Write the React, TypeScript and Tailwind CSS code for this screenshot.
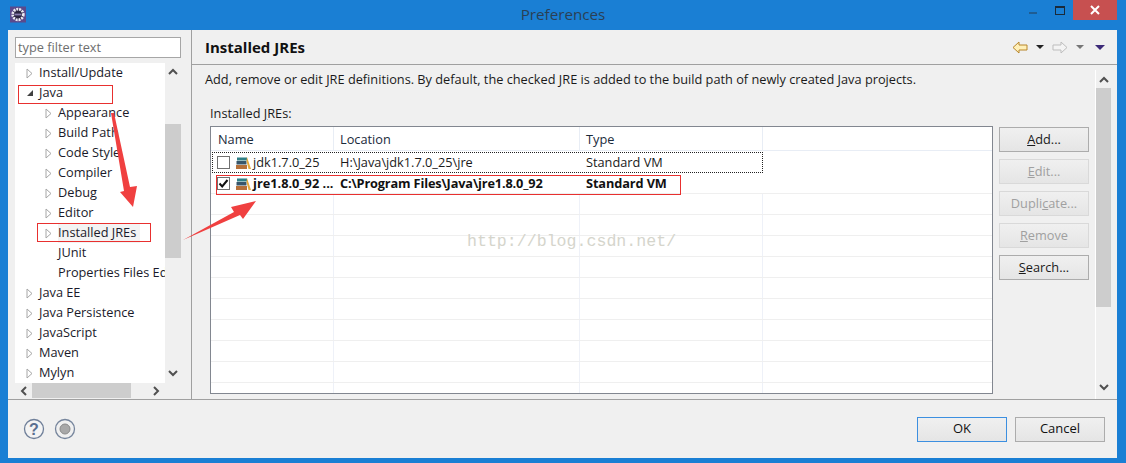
const F = "font-['Open_Sans','Noto_Sans',sans-serif]";

function Tri({ open }: { open?: boolean }) {
  return open ? (
    <svg width="8" height="8" viewBox="0 0 8 8" className="shrink-0"><path d="M7 1V7H1Z" fill="#404040" /></svg>
  ) : (
    <svg width="7" height="11" viewBox="0 0 7 11" className="shrink-0"><path d="M1 1L6 5.5L1 10Z" fill="#fff" stroke="#a6a6a6" /></svg>
  );
}

function Row({ label, depth, arrow = true, open, sel }: { label: string; depth: 0 | 1; arrow?: boolean; open?: boolean; sel?: boolean }) {
  return (
    <div className={`h-5 flex items-center whitespace-nowrap ${depth ? "pl-[30px]" : "pl-[11px]"}`}>
      <span className="w-[13px] shrink-0 flex justify-start">{arrow ? <Tri open={open} /> : null}</span>
      <span className={`text-[12.75px] text-[#1a1a2a] ${sel ? "bg-[#f3f3f3] pr-[4px]" : ""}`}>{label}</span>
    </div>
  );
}

function Chevron({ d, cls }: { d: "u" | "d" | "l" | "r"; cls?: string }) {
  const p = { u: "M1 7L5 3L9 7", d: "M1 3L5 7L9 3", l: "M7 1L3 5L7 9", r: "M3 1L7 5L3 9" }[d];
  return <svg width="10" height="10" viewBox="0 0 10 10" className={cls}><path d={p} fill="none" stroke="#505050" strokeWidth="2" /></svg>;
}

function Btn({ label, dis }: { label: [string, string, string]; dis?: boolean }) {
  return (
    <div className={`h-[25px] w-[90px] border flex items-center justify-center text-[12.75px] bg-gradient-to-b from-[#f0f0f0] to-[#e5e5e5] ${dis ? "border-[#d9d9d9] text-[#a0a0a0]" : "border-[#acacac] text-[#1a1a1a]"}`}>
      {label[0]}<span className="underline">{label[1]}</span>{label[2]}
    </div>
  );
}

function Books() {
  return (
    <svg width="16" height="14" viewBox="0 0 16 14" className="shrink-0">
      <rect x="1" y="1.5" width="10" height="3" fill="#2f7f86" />
      <rect x="0.5" y="5" width="10" height="3.5" fill="#38566b" />
      <rect x="0" y="9" width="11" height="4" fill="#b5703a" />
      <path d="M11 1L15 13H12.5L10.5 5Z" fill="#e5a93c" />
    </svg>
  );
}

function Box({ checked }: { checked?: boolean }) {
  return (
    <span className="w-[13px] h-[13px] border border-[#707070] bg-white shrink-0 flex items-center justify-center">
      {checked ? <svg width="11" height="11" viewBox="0 0 11 11"><path d="M1.5 5.5L4.2 8.5L9.5 2" fill="none" stroke="#111" strokeWidth="2" /></svg> : null}
    </span>
  );
}

const tree: [string, 0 | 1, boolean, boolean?][] = [
  ["Install/Update", 0, true],
  ["Java", 0, true, true],
  ["Appearance", 1, true],
  ["Build Path", 1, true],
  ["Code Style", 1, true],
  ["Compiler", 1, true],
  ["Debug", 1, true],
  ["Editor", 1, true],
  ["Installed JREs", 1, true],
  ["JUnit", 1, false],
  ["Properties Files Editor", 1, false],
  ["Java EE", 0, true],
  ["Java Persistence", 0, true],
  ["JavaScript", 0, true],
  ["Maven", 0, true],
  ["Mylyn", 0, true],
];

function Cols() {
  return (
    <>
      <span className="w-[123px] shrink-0 border-r border-[#eef1f8] h-full" />
      <span className="w-[246px] shrink-0 border-r border-[#eef1f8] h-full" />
      <span className="w-[183px] shrink-0 border-r border-[#eef1f8] h-full" />
    </>
  );
}

export default function App() {
  return (
    <div className={`relative w-[1126px] h-[463px] overflow-hidden bg-[#1a7fd4] flex flex-col ${F}`}>
      {/* Title bar */}
      <div className="h-[30px] shrink-0 flex items-start relative">
        <svg width="16" height="17" viewBox="0 0 18 18" className="ml-[10px] mt-[6px]">
          <rect width="18" height="18" fill="#5b4a8c" />
          <circle cx="9" cy="9" r="6" fill="#2b2540" stroke="#ecebf2" strokeWidth="3" strokeDasharray="2.2 1" />
          <rect x="5" y="8" width="8" height="2" fill="#8a7fb0" />
        </svg>
        <span className="absolute left-0 right-0 text-center text-[15.2px] text-[#2a3f55] top-[3px]">Preferences</span>
        <div className="ml-auto mr-[9px] flex items-start">
          <span className="w-[8px] h-[2px] bg-[#1f5d93] mt-[12px] mr-[18px]" />
          <span className="w-[10px] h-[9px] mt-[6px] border border-[#1a2a3a] border-t-2 mr-[8px]" />
          <span className="w-[44px] h-5 bg-[#c75050] flex items-center justify-center text-white">
            <svg width="10" height="10" viewBox="0 0 10 10"><path d="M1 1L9 9M9 1L1 9" stroke="#fff" strokeWidth="2" /></svg>
          </span>
        </div>
      </div>

      {/* Client */}
      <div className="mx-[8px] w-[1109px] h-[428px] bg-[#f0f0f0] flex flex-col">
        <div className="flex h-[370px] shrink-0 border-b border-[#a0a0a0]">
          {/* Left */}
          <div className="w-[184px] shrink-0 border-r border-[#a0a0a0] pl-[7px] pt-[7px]">
            <div className="w-[166px] h-[21px] border border-[#a6a6a6] bg-white flex items-center pl-[2px] text-[12.75px] text-[#6d6d6d]">type filter text</div>
            <div className="flex w-[166px] h-[320px] mt-[5px]">
              <div className="w-[150px] bg-white overflow-hidden">
                {tree.map(([l, d, a, o]) => <Row key={l} label={l} depth={d} arrow={a} open={o} sel={l === "Installed JREs"} />)}
              </div>
              <div className="w-[16px] flex flex-col items-center justify-between pt-[1px] pb-[5px]">
                <div className="w-full flex flex-col items-center">
                  <Chevron d="u" cls="my-[3px]" />
                  <div className="w-full h-[134px] bg-[#cdcdcd] mt-[44px]" />
                </div>
                <Chevron d="d" />
              </div>
            </div>
            <div className="w-[150px] h-[15px] flex items-center">
              <span className="w-[17px] flex justify-center"><Chevron d="l" /></span>
              <span className="w-[99px] h-full bg-[#cdcdcd]" />
              <span className="flex-1 flex justify-end pr-[4px]"><Chevron d="r" /></span>
            </div>
          </div>

          {/* Right */}
          <div className="flex-1 min-w-0 flex flex-col">
            <div className="h-[35px] shrink-0 border-b border-[#a0a0a0] flex items-center pl-[13px] pr-[12px]">
              <span className="text-[15px] font-bold text-[#111]">Installed JREs</span>
              <div className="ml-auto flex items-center">
                <svg width="16" height="13" viewBox="0 0 16 13"><path d="M1 6.5L7 1V4H15V9H7V12Z" fill="#fff0b8" stroke="#b8862b" /></svg>
                <span className="ml-[8px] w-0 h-0 border-x-[4px] border-x-transparent border-t-[4px] border-t-[#222]" />
                <svg width="16" height="13" viewBox="0 0 16 13" className="ml-[8px]"><path d="M15 6.5L9 1V4H1V9H9V12Z" fill="#f4f4f4" stroke="#bdbdbd" /></svg>
                <span className="ml-[8px] w-0 h-0 border-x-[4px] border-x-transparent border-t-[4px] border-t-[#777]" />
                <span className="ml-[11px] w-0 h-0 border-x-[5px] border-x-transparent border-t-[5px] border-t-[#3c2a78]" />
              </div>
            </div>
            <div className="flex flex-1 min-h-0 pt-[5px]">
              <div className="w-[904px] shrink-0 border-r border-white pl-[13px]">
                <div className="text-[12.75px] text-[#1a1a1a] leading-[18px]">Add, remove or edit JRE definitions. By default, the checked JRE is added to the build path of newly created Java projects.</div>
                <div className="text-[12.75px] text-[#1a1a1a] leading-[18px] mt-[16px] ml-[5px]">Installed <span className="underline">J</span>REs:</div>
                <div className="flex mt-[4px] ml-[5px]">
                  <div className="w-[783px] h-[268px] border border-[#828790] bg-white overflow-hidden flex flex-col">
                    <div className="h-[24px] shrink-0 flex border-b border-[#e8edf5] text-[12.75px] text-[#1a2a3a] leading-[24px]">
                      <span className="w-[123px] shrink-0 border-r border-[#e8edf5] pl-[7px]">Name</span>
                      <span className="w-[246px] shrink-0 border-r border-[#e8edf5] pl-[6px]">Location</span>
                      <span className="w-[183px] shrink-0 border-r border-[#e8edf5] pl-[6px]">Type</span>
                    </div>
                    <div className="h-[21px] shrink-0 mt-[1px] ml-[1px] flex items-center text-[12.75px] text-[#1a1a1a] border border-dotted border-[#222] w-[551px]">
                      <span className="w-[121px] shrink-0 flex items-center gap-[6px] pl-[4px]"><Box /><Books /><span className="-ml-[5px]">jdk1.7.0_25</span></span>
                      <span className="w-[246px] shrink-0 pl-[6px]">H:\Java\jdk1.7.0_25\jre</span>
                      <span className="pl-[6px]">Standard VM</span>
                    </div>
                    <div className="h-[21px] shrink-0 pt-[1px] flex items-center text-[12.75px] font-bold text-[#111] border-b border-[#efefef]">
                      <span className="w-[123px] shrink-0 flex items-center gap-[6px] pl-[6px]"><Box checked /><Books /><span className="-ml-[5px] whitespace-nowrap">jre1.8.0_92 ...</span></span>
                      <span className="w-[246px] shrink-0 pl-[6px] whitespace-nowrap tracking-[-0.15px]">C:\Program Files\Java\jre1.8.0_92</span>
                      <span className="pl-[6px] tracking-[-0.1px]">Standard VM</span>
                    </div>
                    {[0, 1, 2, 3, 4, 5, 6, 7, 8, 9].map((i) => (
                      <div key={i} className="h-[21px] shrink-0 flex border-b border-[#efefef]"><Cols /></div>
                    ))}
                  </div>
                  <div className="ml-[6px] flex flex-col gap-[7px] pt-[1px]">
                    <Btn label={["", "A", "dd..."]} />
                    <Btn label={["", "E", "dit..."]} dis />
                    <Btn label={["Dupli", "c", "ate..."]} dis />
                    <Btn label={["", "R", "emove"]} dis />
                    <Btn label={["", "S", "earch..."]} />
                  </div>
                </div>
              </div>
              <div className="flex-1 flex flex-col items-center pr-[6px] justify-between pb-[6px]">
                <div className="w-full flex flex-col items-center">
                  <Chevron d="u" cls="mt-[5px]" />
                  <div className="w-full h-[219px] bg-[#cdcdcd] mt-[3px]" />
                </div>
                <Chevron d="d" cls="mb-[1px]" />
              </div>
            </div>
          </div>
        </div>

        {/* Footer */}
        <div className="flex-1 flex items-center pl-[15px] pr-[12px]">
          <svg width="22" height="22" viewBox="0 0 22 22"><circle cx="11" cy="11" r="9.5" fill="#f4f4f4" stroke="#6f7f99" strokeWidth="1.3" /><text x="11" y="16.5" textAnchor="middle" fontSize="16" fontWeight="700" fill="#5a6f90" fontFamily="Liberation Sans">?</text></svg>
          <svg width="22" height="22" viewBox="0 0 22 22" className="ml-[9px]"><circle cx="11" cy="11" r="9.5" fill="#f0f0f0" stroke="#76859c" strokeWidth="1.3" /><circle cx="11" cy="11" r="5" fill="#a8a8a8" stroke="#8a8a8a" /></svg>
          <div className="ml-auto flex gap-[8px]">
            <div className="w-[90px] h-[25px] border border-[#3c8fe0] bg-gradient-to-b from-[#f0f0f0] to-[#e5e5e5] flex items-center justify-center text-[13px] text-[#111]">OK</div>
            <div className="w-[90px] h-[25px] border border-[#acacac] bg-gradient-to-b from-[#f0f0f0] to-[#e5e5e5] flex items-center justify-center text-[13px] text-[#111]">Cancel</div>
          </div>
        </div>
      </div>

      {/* Annotations */}
      <div className="absolute left-[18px] top-[85px] w-[95px] h-[19px] border border-[#e8302f]" />
      <div className="absolute left-[37px] top-[223px] w-[114px] h-[19px] border border-[#e8302f]" />
      <div className="absolute left-[216px] top-[175px] w-[465px] h-[20px] border border-[#e8302f]" />
      <svg className="absolute left-0 top-0 pointer-events-none" width="1126" height="463" viewBox="0 0 1126 463">
        <path d="M111 113L114 113L130 187L137 186L133 207L120 192L124 191Z" fill="#f04040" />
        <path d="M183 240L234 212L231 207L256 201L243 219L240 215Z" fill="#f04040" />
      </svg>
      <div className="absolute left-[467px] top-[233px] font-['Liberation_Mono',monospace] text-[16.6px] leading-[18px] text-[#d5d5cc]">http://blog.csdn.net/</div>
    </div>
  );
}
